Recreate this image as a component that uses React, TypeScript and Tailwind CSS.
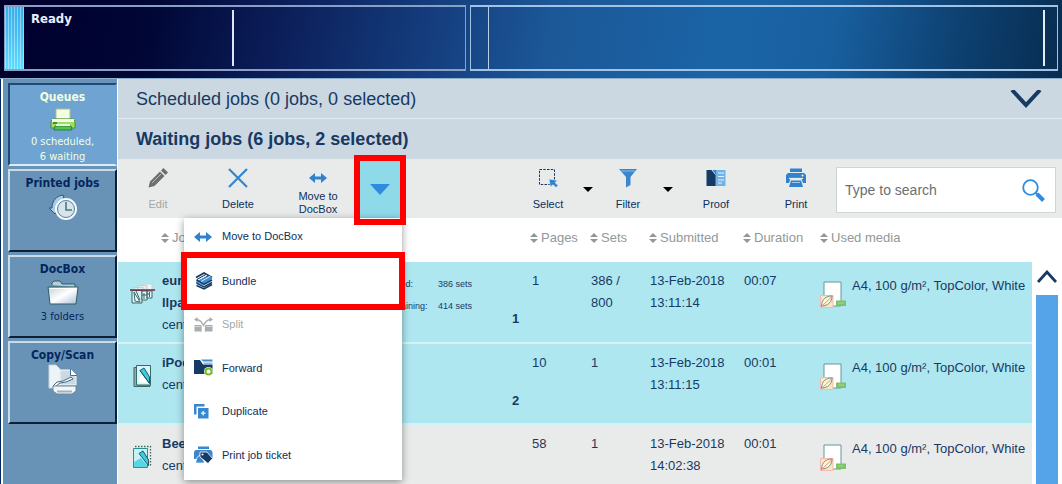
import React from "react";

// ------------------------------------------------------------
// Types and data
// ------------------------------------------------------------

interface Job {
  id: number;
  name: string[];
  owner: string;
  icon: React.ReactNode;
  progress?: { label: string; value: string }[];
  order?: number;
  pages: string;
  sets: string[];
  submitted: string[];
  duration: string;
  media: string;
  selected: boolean;
}

const MEDIA = "A4, 100 g/m², TopColor, White";

const JOBS: Job[] = [
  {
    id: 1, name: ["euro", "llpap"], owner: "central", icon: <BookletIcon />,
    progress: [
      { label: "Printed:", value: "386 sets" },
      { label: "Remaining:", value: "414 sets" },
    ],
    order: 1, pages: "1", sets: ["386 /", "800"], submitted: ["13-Feb-2018", "13:11:14"],
    duration: "00:07", media: MEDIA, selected: true,
  },
  {
    id: 2, name: ["iPod"], owner: "central", icon: <SheetIcon />, order: 2,
    pages: "10", sets: ["1"], submitted: ["13-Feb-2018", "13:11:15"],
    duration: "00:01", media: MEDIA, selected: true,
  },
  {
    id: 3, name: ["Beeld"], owner: "central", icon: <DottedSheetIcon />,
    pages: "58", sets: ["1"], submitted: ["13-Feb-2018", "14:02:38"],
    duration: "00:01", media: MEDIA, selected: false,
  },
];

const COLUMNS = ["Pages", "Sets", "Submitted", "Duration", "Used media"];

// ------------------------------------------------------------
// Sidebar icons
// ------------------------------------------------------------

function GreenPrinterIcon() {
  return (
    <svg width="26" height="26" viewBox="0 0 26 26">
      <path d="M6 2h14v10H6z" fill="#f4ffe0" stroke="#a9bf98" />
      <path d="M3 12h20l2 2v7H1v-7z" fill="#9ee05c" stroke="#4b8f3a" />
      <path d="M2 12h22v3H2z" fill="#f1fbe6" />
      <path d="M3 16h4" stroke="#2f6d2f" strokeWidth="1.5" />
      <path d="M5 19h16l1 4H4z" fill="#4fc54f" stroke="#2f7d3c" />
      <path d="M6 18h14" stroke="#e8ffcc" strokeWidth="2" />
    </svg>
  );
}

function HistoryIcon() {
  return (
    <svg width="30" height="27" viewBox="0 0 30 27">
      <path d="M15 1C8 2 4 7 4 14H1l6 6 5-6H9c0-5 2-8 7-9z" fill="#a9cbe6" stroke="#2d5878" />
      <circle cx="18" cy="15" r="10" fill="#dfe9f0" stroke="#f5fafc" strokeWidth="2" />
      <circle cx="18" cy="15" r="8.5" fill="#d6e4ee" stroke="#5d829b" />
      <path d="M18 8v8h6" fill="none" stroke="#4a7a78" strokeWidth="1.6" />
    </svg>
  );
}

function FolderIcon() {
  return (
    <svg width="32" height="27" viewBox="0 0 32 27">
      <defs>
        <linearGradient id="folder" x1="0" y1="0" x2="1" y2="1">
          <stop offset="0" stopColor="#c3cfda" />
          <stop offset=".5" stopColor="#ffffff" />
          <stop offset="1" stopColor="#a9bfd2" />
        </linearGradient>
      </defs>
      <path d="M5 5V3l2-2h6l2 3h13v3" fill="#b9cfd6" stroke="#2f5f66" />
      <path d="M1 7h30l-2 17H3z" fill="url(#folder)" stroke="#2f5f66" />
      <path d="M2.5 8.5h27" stroke="#fff" />
    </svg>
  );
}

function CopyScanIcon() {
  return (
    <svg width="30" height="31" viewBox="0 0 30 31">
      <path d="M1 1h7l4 4v19H1z" fill="#eef3f7" stroke="#c5d2db" />
      <path d="M12 6h11l5 5v10H12z" fill="#c9d9e5" stroke="#f9fbfc" />
      <path d="M22.500 5v6.500H29" fill="#fff" stroke="#4c6f86" />
      <path d="M5 22l4-4 6-1 8-4 2 2-7 3-6 1-5 4z" fill="#f9fbfc" stroke="#456a80" />
      <path d="M5 22h23v5l-4 3H9l-4-3z" fill="#f3f6f8" stroke="#6d8798" />
      <path d="M9 27.500h15" stroke="#9fb2bf" strokeWidth="2" />
    </svg>
  );
}

// ------------------------------------------------------------
// Toolbar icons
// ------------------------------------------------------------

function PencilIcon() {
  return (
    <svg width="20" height="20" viewBox="0 0 20 20" fill="#6a6f70">
      <path d="M0.5 19.5l1.5-6L12 3.5l4.5 4.5-10 10z" />
      <path d="M13 2.5L15.5 0 20 4.5 17.5 7z" />
      <path d="M4 15l9.500-9.500" stroke="#b4b8b8" />
    </svg>
  );
}

function CrossIcon() {
  return (
    <svg width="20" height="20" viewBox="0 0 20 20">
      <path d="M1 1l18 18M19 1L1 19" stroke="#2f86d3" strokeWidth="2.2" />
    </svg>
  );
}

function MoveIcon() {
  return (
    <svg width="18" height="12" viewBox="0 0 18 12" fill="#2f82cb">
      <path d="M0 6l6-5v3.5h6V1l6 5-6 5V7.500H6V11z" />
    </svg>
  );
}

function SelectIcon() {
  return (
    <svg width="20" height="20" viewBox="0 0 20 20">
      <path d="M1.500 1.500h15v15h-15z" fill="none" stroke="#173a64" strokeDasharray="2.500 1.250" />
      <path d="M11 11l8.500 1.500-2.500 2 3 3-2 2-3-3-2.500 2.500z" fill="#2f82cb" stroke="#e9ebeb" strokeWidth=".6" />
    </svg>
  );
}

function FunnelIcon() {
  return (
    <svg width="18" height="20" viewBox="0 0 18 20" fill="#3a87cd">
      <path d="M0 1h18l-6.500 8v8L7 19.500V9z" />
      <path d="M2 3h14" stroke="#8fbce4" />
    </svg>
  );
}

function ProofIcon() {
  return (
    <svg width="20" height="18" viewBox="0 0 20 18">
      <path d="M9 1h10.500v16H9z" fill="#70b2e8" />
      <path d="M12 4h6M12 7.500h6M12 11h6M12 14h4" stroke="#e3f1fb" strokeWidth="1.2" />
      <path d="M0.500 1h5l4 5v11h-9z" fill="#173a64" />
      <path d="M6.500 1H10v4.500z" fill="#2f82cb" />
    </svg>
  );
}

function PrintIcon() {
  return (
    <svg width="20" height="20" viewBox="0 0 20 20">
      <path d="M4 0.500h12V4H4z" fill="#2f82cb" />
      <path d="M2 5h16l2 2v8h-3l-1.500-4h-11L3 15H0V7z" fill="#2f82cb" />
      <path d="M5 12.500h10l2 6.500H3z" fill="#2f82cb" />
      <path d="M3 10.500h14" stroke="#e9ebeb" strokeWidth="1.3" />
      <circle cx="16.500" cy="7.500" r="1" fill="#fff" />
      <path d="M6 14.500h8" stroke="#9cc6ea" />
    </svg>
  );
}

function SearchIcon() {
  return (
    <svg width="23" height="23" viewBox="0 0 23 23" fill="none" stroke="#2f8be0">
      <circle cx="8.500" cy="8.500" r="7.300" strokeWidth="1.8" />
      <path d="M13.500 13.500l2 2" strokeWidth="2" />
      <path d="M15 15l6.500 6.500" strokeWidth="4" />
    </svg>
  );
}

// ------------------------------------------------------------
// Menu icons
// ------------------------------------------------------------

function BundleIcon() {
  return (
    <svg width="20" height="18" viewBox="0 0 20 18">
      <path d="M2 4.500L10 0l8 4.500v9L10 18l-8-4.500z" fill="#fff" />
      <path d="M2 5.500L10 1l8 4.500" fill="none" stroke="#173a64" strokeWidth="1.8" />
      <path d="M3 7.500l9-5M2.500 10.500L15 3.500" stroke="#173a64" strokeWidth="1.2" />
      <path d="M3 8.500l7 4 8-5.500V5.500L15.500 4z" fill="#3f8fd6" />
      <path d="M4 8l9-5M7 9.500l9.500-5.500" stroke="#fff" strokeWidth=".8" />
      <path d="M2.500 8l7.500 4.500L18 8M2.500 11l7.500 4 8-4.500M2.500 13.500l7.500 3.500 8-4.500" fill="none" stroke="#173a64" strokeWidth="1.5" />
      <path d="M2.500 9.500l7 4" stroke="#3f8fd6" strokeWidth="1.2" />
    </svg>
  );
}

function SplitIcon() {
  return (
    <svg width="19" height="15" viewBox="0 0 19 15" fill="#a9adae">
      <path d="M0.500 8h6.500v6.500H.5zM11.500 8h7v6.500h-7z" />
      <path d="M2 2.500c5.500 0 6 4 7.500 6 1.500-2 2-6 7.500-6M7 8.500v6M11.500 8.500v6" fill="none" stroke="#a9adae" strokeWidth="1.3" />
      <path d="M0 2.500L3.500 0v5zM19 2.500L15.500 0v5z" />
      <path d="M0.500 9.500h6M12.500 9.500h6" stroke="#d9dbdb" />
    </svg>
  );
}

function ForwardIcon() {
  return (
    <svg width="19" height="17" viewBox="0 0 19 17">
      <path d="M7 0.500h11.500v2H9z" fill="#3f8fd6" />
      <path d="M9 3.500h9.500V5H10z" fill="#8cbde8" />
      <path d="M0 1h6l3 4.500h9.500V15H0z" fill="#173a64" />
      <circle cx="14.500" cy="12.500" r="4.500" fill="#fff" />
      <circle cx="14.500" cy="12.500" r="3" fill="#fff" stroke="#76bc2c" strokeWidth="2" />
    </svg>
  );
}

function DuplicateIcon() {
  return (
    <svg width="15" height="15" viewBox="0 0 15 15">
      <path d="M0 0h10.500v2.500h-8v8H0z" fill="#3a87cd" />
      <path d="M4 4h10.500v10.500H4z" fill="#3a87cd" />
      <path d="M9.250 7v4.500M7 9.250h4.500" stroke="#d6e9f8" strokeWidth="1.5" />
    </svg>
  );
}

function TicketIcon() {
  return (
    <svg width="19" height="18" viewBox="0 0 19 18">
      <path d="M4 0.500h11V3H4zM1.500 4h15.500l1.500 2v7H0V6z" fill="#3a87cd" />
      <path d="M3 11.500l3-2.500 5 8H1.500z" fill="#3a87cd" stroke="#fff" strokeWidth=".8" />
      <path d="M6 6h7l5.500 6.500-4.500 5L6 11z" fill="#173a64" stroke="#fff" strokeWidth=".8" />
      <circle cx="8.500" cy="8.500" r="1" fill="#fff" />
    </svg>
  );
}

// ------------------------------------------------------------
// Table icons
// ------------------------------------------------------------

function BookletIcon() {
  return (
    <svg width="25" height="22" viewBox="0 0 25 22">
      <path d="M13 1h9v7h-9z" fill="#eef6f7" stroke="#c5d3d6" />
      <path d="M8 2.500h9V8H8zM4 4.500h9V8H4z" fill="#e2eef0" stroke="#c0d0d3" />
      <path d="M2 7.500h10V20H2z" fill="#d4f3f5" stroke="#38696b" />
      <path d="M12 8h5v9h-5zM17 8h5v7h-5z" fill="#e6f8f9" stroke="#38696b" />
      <path d="M4 9l1 9 5 1z" fill="#fff" stroke="#38696b" />
      <path d="M6 8l4 9M14 10v6M12 12h5M19.500 9v5M17 11h3" stroke="#38696b" />
      <path d="M0 7h25" stroke="#6a2a3e" strokeWidth="1.5" />
    </svg>
  );
}

function SheetIcon() {
  return (
    <svg width="19" height="24" viewBox="0 0 19 24">
      <path d="M1 3.500h3V21h13v1.500H1z" fill="#9da9ab" stroke="#38696b" />
      <path d="M3.500 1.500h14V21h-14z" fill="#d5f7fb" stroke="#38696b" />
      <path d="M5.500 18L9 7l8 12z" fill="#fff" />
      <path d="M7 6.500L11 4l5.500 9v6.500z" fill="#3ccbe0" stroke="#22585c" />
      <path d="M7 6.500L16.500 19.500" stroke="#22585c" />
    </svg>
  );
}

function DottedSheetIcon() {
  return (
    <svg width="20" height="24" viewBox="0 0 20 24">
      <path d="M3 1.500h15.500v19" fill="none" stroke="#38696b" strokeWidth="1.3" strokeDasharray="1.5 1.5" />
      <path d="M1.500 3.500h14v19h-14z" fill="#c4f2f6" stroke="#2e8d8d" />
      <path d="M2 22V17l7-4 6 7v2z" fill="#59d6e2" />
      <path d="M7 8.500L11 6l5.500 9v5.500z" fill="#3ccbe0" stroke="#22585c" />
    </svg>
  );
}

function MediaIcon() {
  return (
    <svg width="26" height="27" viewBox="0 0 26 27" className="shrink-0">
      <path d="M4 1h17v24H4z" fill="#fff" stroke="#62989d" />
      <path d="M.5 14.500h12.500V26.500H.5z" fill="#fbe6c4" stroke="#f3b9ac" />
      <path d="M1.500 25C2 18 6 15 12 15c0 6-4 10-10.500 10z" fill="#fff6cf" stroke="#6c9598" />
      <path d="M1 26L12.500 15" stroke="#f08a8a" />
      <path d="M16 19.500h10V25H16z" fill="#7cc268" />
      <path d="M18 22h6" stroke="#a7d795" />
    </svg>
  );
}

function SortIcon() {
  return (
    <svg width="8" height="10" viewBox="0 0 8 10" fill="#929898" className="shrink-0">
      <path d="M0 4l4-4 4 4zM0 6h8L4 10z" />
    </svg>
  );
}

// ------------------------------------------------------------
// Building blocks
// ------------------------------------------------------------

interface TileProps {
  title: string;
  icon: React.ReactNode;
  lines?: string[];
  active?: boolean;
}

function Tile({ title, icon, lines = [], active }: TileProps) {
  return (
    <button
      className={
        active
          ? "flex h-[83px] w-full flex-col items-center border-2 border-t-[#1d4a78] border-l-[#1d4a78] border-r-[#6fa3d2] border-b-[#dcebf5] bg-[#6fa3d2] pt-1 text-[#f2ffe0]"
          : "flex h-[83px] w-full flex-col items-center border-2 border-t-[#c9dbe6] border-l-[#c9dbe6] border-r-[#0e2036] border-b-[#0e2036] bg-[#6893b6] pt-1 text-[#04265e]"
      }
    >
      <span className="text-xs leading-4 font-bold">{title}</span>
      <span className="flex h-8 items-center justify-center">{icon}</span>
      {lines.map((l) => (
        <span key={l} className="text-[11px] leading-[15px]">{l}</span>
      ))}
    </button>
  );
}

function Tool({ label, icon, width = "w-20", muted }: {
  label: string; icon: React.ReactNode; width?: string; muted?: boolean;
}) {
  return (
    <button
      disabled={muted}
      className={`flex h-full flex-col items-center pt-2 text-[11px] ${width} ${muted ? "text-[#a3a8a9]" : "text-[#0b2f5c]"}`}
    >
      <span className="flex h-5 items-center">{icon}</span>
      <span className="mt-2 leading-4">{label}</span>
    </button>
  );
}

function MoreArrow({ label }: { label: string }) {
  return (
    <button aria-label={label} className="flex h-full w-4 items-center justify-center">
      <svg width="10" height="5" viewBox="0 0 10 5"><path d="M0 0h10L5 5z" /></svg>
    </button>
  );
}

function MenuItem({ label, icon, muted, marked }: {
  label: string; icon: React.ReactNode; muted?: boolean; marked?: boolean;
}) {
  return (
    <li className="relative flex flex-1 first:h-[41px] first:flex-none first:pb-1">
      <button
        disabled={muted}
        className={`flex w-full items-center gap-1 pl-2.5 text-left text-[11px] ${muted ? "text-[#a3a8a9]" : "text-[#0b2f5c]"}`}
      >
        <span className="w-6">{icon}</span>
        <span>{label}</span>
      </button>
      {marked && <span className="pointer-events-none absolute -inset-x-[3px] -inset-y-[7px] border-6 border-[#ff0000]" />}
    </li>
  );
}

function ActionMenu() {
  return (
    <ul className="absolute top-full right-0 z-10 flex h-[262px] w-[218px] flex-col bg-white pb-[3px] shadow-[0_2px_8px_rgba(0,0,0,0.4)]">
      <MenuItem label="Move to DocBox" icon={<MoveIcon />} />
      <MenuItem label="Bundle" icon={<BundleIcon />} marked />
      <MenuItem label="Split" icon={<SplitIcon />} muted />
      <MenuItem label="Forward" icon={<ForwardIcon />} />
      <MenuItem label="Duplicate" icon={<DuplicateIcon />} />
      <MenuItem label="Print job ticket" icon={<TicketIcon />} />
    </ul>
  );
}

function StatusHeader() {
  return (
    <header className="flex h-[79px] shrink-0 gap-1 border-b border-[#8fb0cc] bg-[linear-gradient(100deg,#00002c_0%,#000635_14%,#0b1d58_26%,#143c7c_40%,#1c5898_52%,#1a64a6_68%,#185f9f_78%,#0d4070_90%,#082c50_100%)] px-1 pt-[5px] pb-[7px]">
      <div className="flex w-[462px] border-x border-y-2 border-[#8a9fc4]">
        <div className="w-[19px] bg-[repeating-linear-gradient(90deg,#ffffff66_0_1px,transparent_1px_3px),linear-gradient(#35aeea,#4cc0f4_50%,#5cdcff)]" />
        <p className="w-52 pt-1 pl-[7px] text-[13px] leading-4 font-bold text-[#e8efff]">Ready</p>
        <div className="my-[3px] w-[2px] bg-[#dfe5f5]" />
      </div>
      <div className="flex flex-1 justify-between border-x border-y-2 border-[#a3c3e4]">
        <div className="ml-[17px] w-px bg-[#b5cfe8]" />
        <div className="my-[3px] mr-3 w-[2px] bg-[#e4ecf4]" />
      </div>
    </header>
  );
}

function JobRow({ job }: { job: Job }) {
  return (
    <tr className={`h-[81px] border-b-2 align-top ${job.selected ? "border-[#d5f3f7] bg-[#aee7f0]" : "border-white bg-[#e9ebeb]"}`}>
      <td className="pt-2">
        <div className="flex">
          <div className="flex h-12 w-11 items-center justify-center pl-1">{job.icon}</div>
          <div className="flex-1">
            {job.name.map((n) => <p key={n} className="font-bold">{n}</p>)}
            <p>{job.owner}</p>
          </div>
          <div className="w-[130px] pt-[3px] text-[9px]">
            {job.progress?.map((p) => (
              <div key={p.label} className="flex">
                <span className="w-14">{p.label}</span>
                <span>{p.value}</span>
              </div>
            ))}
          </div>
          <p className="w-[18px] pt-[38px] font-bold">{job.order}</p>
        </div>
      </td>
      <td className="pt-2 pl-0.5">{job.pages}</td>
      <td className="pt-2 pl-px">{job.sets.map((s) => <p key={s}>{s}</p>)}</td>
      <td className="pt-2 pl-px">{job.submitted.map((s) => <p key={s}>{s}</p>)}</td>
      <td className="pt-2 pl-px">{job.duration}</td>
      <td className="pt-[13px]">
        <div className="flex items-start gap-1.5">
          <span className="pt-1.5"><MediaIcon /></span>
          <span className="whitespace-nowrap">{job.media}</span>
        </div>
      </td>
    </tr>
  );
}

export default function App() {
  return (
    <div className="flex h-screen flex-col overflow-hidden bg-white font-['Liberation_Sans',Arial,sans-serif] text-[#173a64]">
      <div className="font-['DejaVu_Sans_Condensed','DejaVu_Sans',sans-serif]">
        <StatusHeader />
      </div>

      <div className="flex min-h-0 flex-1">
        {/* Queue navigation */}
        <nav className="flex w-[118px] shrink-0 flex-col border-l border-l-[#00285a] bg-[#6893b6] font-['DejaVu_Sans_Condensed','DejaVu_Sans',sans-serif]">
          <div className="flex flex-1 flex-col gap-[3px] border-r border-l-2 border-white pt-1 pl-[5px]">
            <Tile title="Queues" icon={<GreenPrinterIcon />} lines={["0 scheduled,", "6 waiting"]} active />
            <Tile title="Printed jobs" icon={<HistoryIcon />} />
            <Tile title="DocBox" icon={<FolderIcon />} lines={["3 folders"]} />
            <Tile title="Copy/Scan" icon={<CopyScanIcon />} />
          </div>
        </nav>

        <main className="flex min-w-0 flex-1 flex-col">
          <button className="flex h-10 shrink-0 items-center justify-between border-b border-[#e4ebf0] bg-[#cbd7e1] pr-5 pl-[18px] text-lg">
            <span>Scheduled jobs (0 jobs, 0 selected)</span>
            <svg width="32" height="18" viewBox="0 0 32 18">
              <path d="M2 0l14 15L30 0" fill="none" stroke="#173a64" strokeWidth="4" />
            </svg>
          </button>
          <h2 className="flex h-[41px] shrink-0 items-center border-b border-[#e4ebf0] bg-[#cbd7e1] pl-[18px] text-lg font-bold">
            Waiting jobs (6 jobs, 2 selected)
          </h2>

          {/* Toolbar */}
          <div className="flex h-[58px] shrink-0 bg-[#e9ebeb]">
            <Tool label="Edit" icon={<PencilIcon />} muted />
            <Tool label="Delete" icon={<CrossIcon />} />
            <button className="flex w-20 flex-col items-center pt-3 text-[11px] leading-[13px] text-[#0b2f5c]">
              <MoveIcon />
              <span className="mt-1.5 w-14">Move to DocBox</span>
            </button>
            <div className="relative h-full w-11">
              <button aria-label="More actions" aria-expanded="true" className="flex h-full w-full items-center justify-center bg-[#8fdae9]">
                <svg width="20" height="11" viewBox="0 0 20 11"><path d="M0 0h20L10 11z" fill="#2f8be0" /></svg>
              </button>
              <ActionMenu />
              <span className="pointer-events-none absolute -inset-x-1 -top-[5px] -bottom-[7px] z-20 border-6 border-[#ff0000]" />
            </div>

            <div className="ml-auto flex h-full">
              <Tool label="Select" icon={<SelectIcon />} width="w-16" />
              <MoreArrow label="Selection options" />
              <Tool label="Filter" icon={<FunnelIcon />} width="w-16" />
              <MoreArrow label="Filter options" />
              <Tool label="Proof" icon={<ProofIcon />} />
              <Tool label="Print" icon={<PrintIcon />} />
            </div>
            <label className="mt-[7px] mr-1.5 flex h-[46px] w-[220px] items-center border border-[#cfd5d6] bg-white pr-2.5 pl-2">
              <input
                type="text"
                aria-label="Search jobs"
                placeholder="Type to search"
                className="min-w-0 flex-1 text-sm outline-none placeholder:text-[#6b7071]"
              />
              <SearchIcon />
            </label>
          </div>

          {/* Job list */}
          <div className="flex min-h-0 flex-1">
            <div className="min-w-0 flex-1 overflow-hidden">
              <table className="w-full table-fixed border-collapse text-[13px] leading-[22px]">
                <colgroup>
                  <col />
                  <col className="w-[60px]" />
                  <col className="w-[59px]" />
                  <col className="w-[94px]" />
                  <col className="w-[77px]" />
                  <col className="w-[212px]" />
                </colgroup>
                <thead>
                  <tr className="h-11 text-left text-[#929898]">
                    <th className="pb-1 pl-[43px] font-normal">
                      <span className="flex items-center gap-[3px]"><SortIcon />Job</span>
                    </th>
                    {COLUMNS.map((c) => (
                      <th key={c} className="pb-1 font-normal">
                        <span className="flex items-center gap-[3px] whitespace-nowrap"><SortIcon />{c}</span>
                      </th>
                    ))}
                  </tr>
                </thead>
                <tbody>
                  {JOBS.map((j) => <JobRow key={j.id} job={j} />)}
                </tbody>
              </table>
            </div>

            {/* Scroll bar */}
            <div className="flex w-[30px] flex-col pt-[52px] pr-1 pl-1">
              <button aria-label="Scroll up" className="flex h-[25px] shrink-0 justify-center">
                <svg width="20" height="13" viewBox="0 0 20 13">
                  <path d="M1 12L10 2l9 10" fill="none" stroke="#173a64" strokeWidth="2.8" />
                </svg>
              </button>
              <div className="flex-1 bg-[#55a4e9]" />
            </div>
          </div>
        </main>
      </div>
    </div>
  );
}
